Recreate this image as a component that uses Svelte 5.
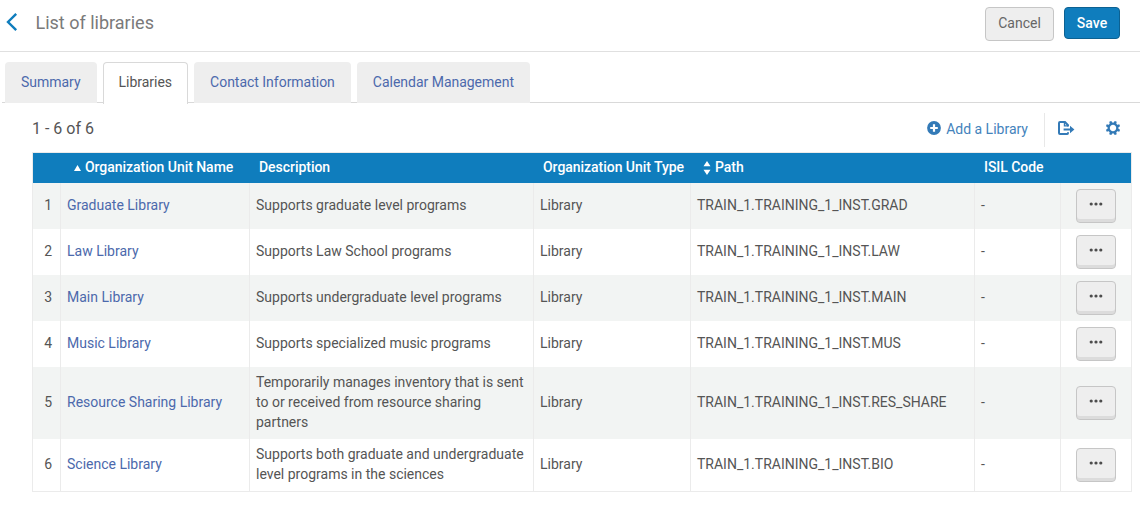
<script>
	const tabs = ['Summary', 'Libraries', 'Contact Information', 'Calendar Management'];
	const libraries = [
		{ name: 'Graduate Library', desc: 'Supports graduate level programs', code: 'GRAD' },
		{ name: 'Law Library', desc: 'Supports Law School programs', code: 'LAW' },
		{ name: 'Main Library', desc: 'Supports undergraduate level programs', code: 'MAIN' },
		{ name: 'Music Library', desc: 'Supports specialized music programs', code: 'MUS' },
		{
			name: 'Resource Sharing Library',
			desc: 'Temporarily manages inventory that is sent to or received from resource sharing partners',
			code: 'RES_SHARE'
		},
		{
			name: 'Science Library',
			desc: 'Supports both graduate and undergraduate level programs in the sciences',
			code: 'BIO'
		}
	];

	let active = $state('Libraries');
</script>

<header>
	<button class="back" aria-label="Back">
		<svg width="12" height="20" viewBox="0 0 12 20">
			<path d="M10.2 1.8 2 10l8.2 8.2" fill="none" stroke="#0f7dbd" stroke-width="2.4" />
		</svg>
	</button>
	<h1>List of libraries</h1>
	<button class="btn cancel">Cancel</button>
	<button class="btn save">Save</button>
</header>

<nav>
	{#each tabs as tab (tab)}
		<button class="tab" class:on={active === tab} onclick={() => (active = tab)}>{tab}</button>
	{/each}
</nav>

<main>
	<div class="toolbar">
		<span class="count">1 - 6 of {libraries.length}</span>
		<button class="add">
			<svg width="14" height="14" viewBox="0 0 14 14">
				<circle cx="7" cy="7" r="6.9" fill="#337ab7" />
				<path d="M7 3.2v7.6M3.2 7h7.6" stroke="#fff" stroke-width="2.2" />
			</svg>
			Add a Library
		</button>
		<span class="divider"></span>
		<button class="icon export" aria-label="Export">
			<svg width="17" height="14" viewBox="0 0 17 14" fill="none" stroke="#337ab7">
				<path d="M10 5.6V4.2L7 1H2Q1 1 1 2v10q0 1 1 1h7.2q.8 0 .8-1v-.8" stroke-width="2" />
				<path d="M6.5 1v3.9H10" stroke-width="1.4" />
				<path d="M5.6 8.5h8" stroke-width="2" />
				<path d="m12 4.8 4.4 3.7-4.4 3.7z" fill="#337ab7" stroke="none" />
			</svg>
		</button>
		<button class="icon" aria-label="Settings">
			<svg width="14" height="14" viewBox="-7 -7 14 14">
				<circle r="4.3" fill="none" stroke="#337ab7" stroke-width="2.2" />
				{#each [22.5, 67.5, 112.5, 157.5, 202.5, 247.5, 292.5, 337.5] as a (a)}
					<path d="M-1.5-4.5-1.1-7.2h2.2l.4 2.7z" fill="#337ab7" transform="rotate({a})" />
				{/each}
			</svg>
		</button>
	</div>

	<table>
		<colgroup>
			<col class="c-num" /><col class="c-name" /><col class="c-desc" /><col class="c-type" />
			<col class="c-path" /><col class="c-isil" /><col class="c-act" />
		</colgroup>
		<thead>
			<tr>
				<th></th>
				<th class="sorted">
					<svg width="7" height="6" viewBox="0 0 7 6"><path d="M3.5 0 7 6H0z" fill="#fff" /></svg>
					Organization Unit Name
				</th>
				<th>Description</th>
				<th>Organization Unit Type</th>
				<th class="sortable">
					<svg width="8" height="14" viewBox="0 0 8 14">
						<path d="M4 0 7.5 5.3h-7zM4 14 .5 8.7h7z" fill="#fff" />
					</svg>
					Path
				</th>
				<th>ISIL Code</th>
				<th></th>
			</tr>
		</thead>
		<tbody>
			{#each libraries as lib, i (lib.code)}
				<tr>
					<td class="num">{i + 1}</td>
					<td class="name">{lib.name}</td>
					<td>{lib.desc}</td>
					<td>Library</td>
					<td>TRAIN_1.TRAINING_1_INST.{lib.code}</td>
					<td>-</td>
					<td class="act">
						<button class="more" aria-label="Row actions">
							<svg width="14" height="4" viewBox="0 0 14 4" fill="#4c4c4c">
								<circle cx="2.2" cy="2" r="1.6" />
								<circle cx="7" cy="2" r="1.6" />
								<circle cx="11.8" cy="2" r="1.6" />
							</svg>
						</button>
					</td>
				</tr>
			{/each}
		</tbody>
	</table>
</main>

<style>
	:global(body) {
		background: #fff;
		color: #555;
		font: 14px/20px Roboto, 'Liberation Sans', sans-serif;
	}
	button {
		font: inherit;
		color: inherit;
		background: none;
		border: 0;
		margin: 0;
		padding: 0;
		cursor: pointer;
	}
	svg {
		display: block;
		flex: none;
	}
	header {
		box-sizing: border-box;
		height: 52px;
		display: flex;
		align-items: flex-start;
		padding: 7px 20px 0 6px;
		border-bottom: 1px solid #e0e0e0;
	}
	.back {
		margin-top: 5px;
	}
	h1 {
		flex: 1;
		margin: 6px 0 0 17.5px;
		font-size: 18px;
		line-height: 20px;
		font-weight: 400;
		color: #7a7a7a;
	}
	.btn {
		box-sizing: border-box;
		border: 1px solid #c6c6c6;
		border-radius: 4px;
	}
	.cancel {
		width: 69px;
		height: 34px;
		padding-bottom: 2px;
		background: #eee;
		color: #666;
	}
	.save {
		width: 56px;
		height: 32px;
		margin-left: 10px;
		background: #0f7dbd;
		border-color: #0c6192;
		color: #fff;
		font-weight: 500;
	}
	nav {
		display: flex;
		gap: 6px;
		height: 40px;
		margin: 10px 0 0 2px;
		padding-left: 3px;
		border-bottom: 1px solid #d9d9d9;
	}
	.tab {
		box-sizing: border-box;
		height: 41px;
		padding: 0 16px 2px;
		background: #eee;
		border-radius: 4px 4px 0 0;
		color: #4c69ac;
		letter-spacing: -0.02px;
	}
	.tab.on {
		height: 42px;
		padding: 0 15px 3px;
		background: #fff;
		border: 1px solid #d9d9d9;
		border-bottom: 0;
		color: #555;
	}
	main {
		padding: 0 8px 0 32px;
	}
	.toolbar {
		display: flex;
		align-items: center;
		height: 49px;
	}
	.count {
		flex: 1;
		font-size: 16px;
		padding-top: 2px;
	}
	.add {
		display: flex;
		align-items: center;
		gap: 5px;
		padding-top: 2px;
		color: #4483bc;
	}
	.add svg {
		margin-top: -1px;
	}
	.divider {
		width: 1px;
		height: 34px;
		margin: 4px 13px 0 16px;
		background: #e8e8e8;
	}
	.icon {
		padding: 1px 12px 0 0;
	}
	.export {
		margin-right: 31px;
		padding-right: 0;
	}
	table {
		width: 1100px;
		table-layout: fixed;
		border-collapse: separate;
		border-spacing: 0;
		border: solid #ebebeb;
		border-width: 1px 0 1px 1px;
	}
	.c-num {
		width: 28px;
	}
	.c-name {
		width: 189px;
	}
	.c-desc,
	.c-path {
		width: 284px;
	}
	.c-type {
		width: 157px;
	}
	.c-isil {
		width: 86px;
	}
	.c-act {
		width: 71px;
	}
	th {
		height: 30px;
		box-sizing: border-box;
		padding: 0 0 2px 9px;
		background: #0f7dbd;
		color: #fff;
		font-weight: 500;
		letter-spacing: -0.04px;
		text-align: left;
		white-space: nowrap;
	}
	th:last-child {
		border-right: 1px solid #ebebeb;
	}
	th svg {
		display: inline-block;
		margin-right: 1px;
	}
	.sorted {
		padding-left: 12.5px;
	}
	.sorted svg {
		vertical-align: 1px;
	}
	.sortable {
		padding-left: 12px;
	}
	.sortable svg {
		margin-right: 0.5px;
		vertical-align: -3px;
	}
	td {
		box-sizing: border-box;
		height: 46px;
		padding: 5px 6px 7px;
		border-right: 1px solid #ebebeb;
		vertical-align: middle;
	}
	tbody tr:nth-child(odd) {
		background: #f2f4f3;
	}
	.num {
		padding-right: 8px;
		text-align: right;
	}
	.name {
		color: #4c69ac;
	}
	.act {
		padding: 0;
	}
	.more {
		box-sizing: border-box;
		display: flex;
		justify-content: center;
		width: 40px;
		height: 34px;
		margin: 0 auto;
		padding-top: 12px;
		background: #eee;
		border: 1px solid #c6c6c6;
		border-radius: 4px;
		box-shadow: inset 0 -3px 0 #dcdcdc;
	}
</style>
